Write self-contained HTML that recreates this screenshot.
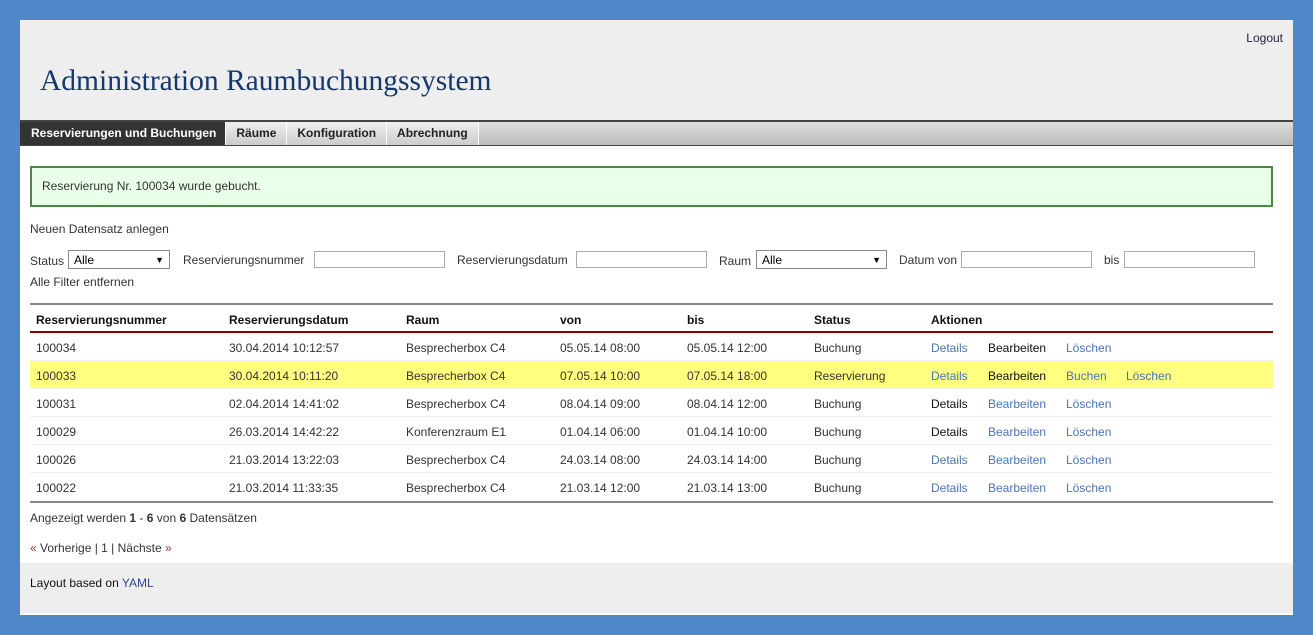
<!DOCTYPE html><html><head><style>
body{margin:0;width:1313px;height:635px;background:#4f88c8;font-family:"Liberation Sans",sans-serif;font-size:12px;color:#333;position:relative;overflow:hidden}
.pg{position:absolute;left:20px;top:20px;width:1273px;height:595px;background:#fff}
.hd{position:absolute;left:0;top:0;width:1273px;height:100px;background:#eee}
.logout{position:absolute;right:10px;top:11px;color:#224}
h1{position:absolute;left:20px;top:45px;margin:0;font:29.5px "Liberation Serif",serif;color:#14386b}
.nav{position:absolute;left:0;top:100px;width:1273px;border-top:2px solid #444;border-bottom:1px solid #444;background:linear-gradient(#ddd,#bbb);box-sizing:border-box;height:26px}
.nav span{float:left;height:23px;line-height:23px;padding:0 10px;font-weight:bold;color:#222;border-right:1px solid #fff;background:linear-gradient(#eee,#ccc)}
.nav span.a{background:#333;color:#fff;padding:0 9px 0 11px}
.msg{position:absolute;left:10px;top:146px;width:1243px;height:41px;border:2px solid #4a8a40;background:#eaffea;line-height:37px;padding-left:10px;box-sizing:border-box}
.t{position:absolute;white-space:nowrap}
.in{position:absolute;height:17px;border:1px solid #aaa;box-sizing:border-box;background:#fff}
.sel{position:absolute;height:19px;border:1px solid #888;box-sizing:border-box;background:#fff;padding-left:5px;line-height:19px;color:#000}
.sel:after{content:"▼";position:absolute;right:5px;font-size:9px}
.hl{position:absolute;left:10px;width:1243px}
.row{position:absolute;left:10px;width:1243px;height:28px;border-bottom:1px solid #eee;box-sizing:border-box}
.row span{position:absolute;top:8px}
.b{color:#4a75b5}
.ft{position:absolute;left:0;top:543px;width:1273px;height:50px;background:#eee}
</style></head><body><div class="pg">
<div class="hd"><span class="logout">Logout</span><h1>Administration Raumbuchungssystem</h1></div>
<div class="nav"><span class="a">Reservierungen und Buchungen</span><span>Räume</span><span>Konfiguration</span><span>Abrechnung</span></div>
<div class="msg">Reservierung Nr. 100034 wurde gebucht.</div>
<div class="t" style="left:10px;top:202px">Neuen Datensatz anlegen</div>
<div class="t" style="left:10px;top:234px">Status</div><div class="sel" style="left:48px;top:230px;width:102px">Alle</div>
<div class="t" style="left:163px;top:233px">Reservierungsnummer</div><div class="in" style="left:294px;top:231px;width:131px"></div>
<div class="t" style="left:437px;top:233px">Reservierungsdatum</div><div class="in" style="left:556px;top:231px;width:131px"></div>
<div class="t" style="left:699px;top:234px">Raum</div><div class="sel" style="left:736px;top:230px;width:131px">Alle</div>
<div class="t" style="left:879px;top:233px">Datum von</div><div class="in" style="left:941px;top:231px;width:131px"></div>
<div class="t" style="left:1084px;top:233px">bis</div><div class="in" style="left:1104px;top:231px;width:131px"></div>
<div class="t" style="left:10px;top:255px">Alle Filter entfernen</div>
<div class="hl" style="top:283px;height:2px;background:#888"></div>
<div class="row" style="top:285px;border:0;font-weight:bold;color:#111"><span style="left:6px">Reservierungsnummer</span><span style="left:199px">Reservierungsdatum</span><span style="left:376px">Raum</span><span style="left:530px">von</span><span style="left:657px">bis</span><span style="left:784px">Status</span><span style="left:901px">Aktionen</span></div>
<div class="hl" style="top:311px;height:2px;background:#8b0000"></div>
<div class="row" style="top:313px"><span style="left:6px">100034</span><span style="left:199px">30.04.2014 10:12:57</span><span style="left:376px">Besprecherbox C4</span><span style="left:530px">05.05.14 08:00</span><span style="left:657px">05.05.14 12:00</span><span style="left:784px">Buchung</span><span class="b" style="left:901px">Details</span><span style="left:958px;color:#111">Bearbeiten</span><span class="b" style="left:1036px">Löschen</span></div>
<div class="row" style="top:341px;background:#ffff80"><span style="left:6px">100033</span><span style="left:199px">30.04.2014 10:11:20</span><span style="left:376px">Besprecherbox C4</span><span style="left:530px">07.05.14 10:00</span><span style="left:657px">07.05.14 18:00</span><span style="left:784px">Reservierung</span><span class="b" style="left:901px">Details</span><span style="left:958px;color:#111">Bearbeiten</span><span class="b" style="left:1036px">Buchen</span><span class="b" style="left:1096px">Löschen</span></div>
<div class="row" style="top:369px"><span style="left:6px">100031</span><span style="left:199px">02.04.2014 14:41:02</span><span style="left:376px">Besprecherbox C4</span><span style="left:530px">08.04.14 09:00</span><span style="left:657px">08.04.14 12:00</span><span style="left:784px">Buchung</span><span style="left:901px;color:#111">Details</span><span class="b" style="left:958px">Bearbeiten</span><span class="b" style="left:1036px">Löschen</span></div>
<div class="row" style="top:397px"><span style="left:6px">100029</span><span style="left:199px">26.03.2014 14:42:22</span><span style="left:376px">Konferenzraum E1</span><span style="left:530px">01.04.14 06:00</span><span style="left:657px">01.04.14 10:00</span><span style="left:784px">Buchung</span><span style="left:901px;color:#111">Details</span><span class="b" style="left:958px">Bearbeiten</span><span class="b" style="left:1036px">Löschen</span></div>
<div class="row" style="top:425px"><span style="left:6px">100026</span><span style="left:199px">21.03.2014 13:22:03</span><span style="left:376px">Besprecherbox C4</span><span style="left:530px">24.03.14 08:00</span><span style="left:657px">24.03.14 14:00</span><span style="left:784px">Buchung</span><span class="b" style="left:901px">Details</span><span class="b" style="left:958px">Bearbeiten</span><span class="b" style="left:1036px">Löschen</span></div>
<div class="row" style="top:453px;border:0"><span style="left:6px">100022</span><span style="left:199px">21.03.2014 11:33:35</span><span style="left:376px">Besprecherbox C4</span><span style="left:530px">21.03.14 12:00</span><span style="left:657px">21.03.14 13:00</span><span style="left:784px">Buchung</span><span class="b" style="left:901px">Details</span><span class="b" style="left:958px">Bearbeiten</span><span class="b" style="left:1036px">Löschen</span></div>
<div class="hl" style="top:481px;height:2px;background:#888"></div>
<div class="t" style="left:10px;top:491px">Angezeigt werden <b>1</b> - <b>6</b> von <b>6</b> Datensätzen</div>
<div class="t" style="left:10px;top:521px"><span style="color:#a33">«</span> Vorherige | 1 | Nächste <span style="color:#a33">»</span></div>
<div class="ft"><span class="t" style="left:10px;top:13px;color:#111">Layout based on <span style="color:#2a4a8a">YAML</span></span></div>
</div></body></html>
